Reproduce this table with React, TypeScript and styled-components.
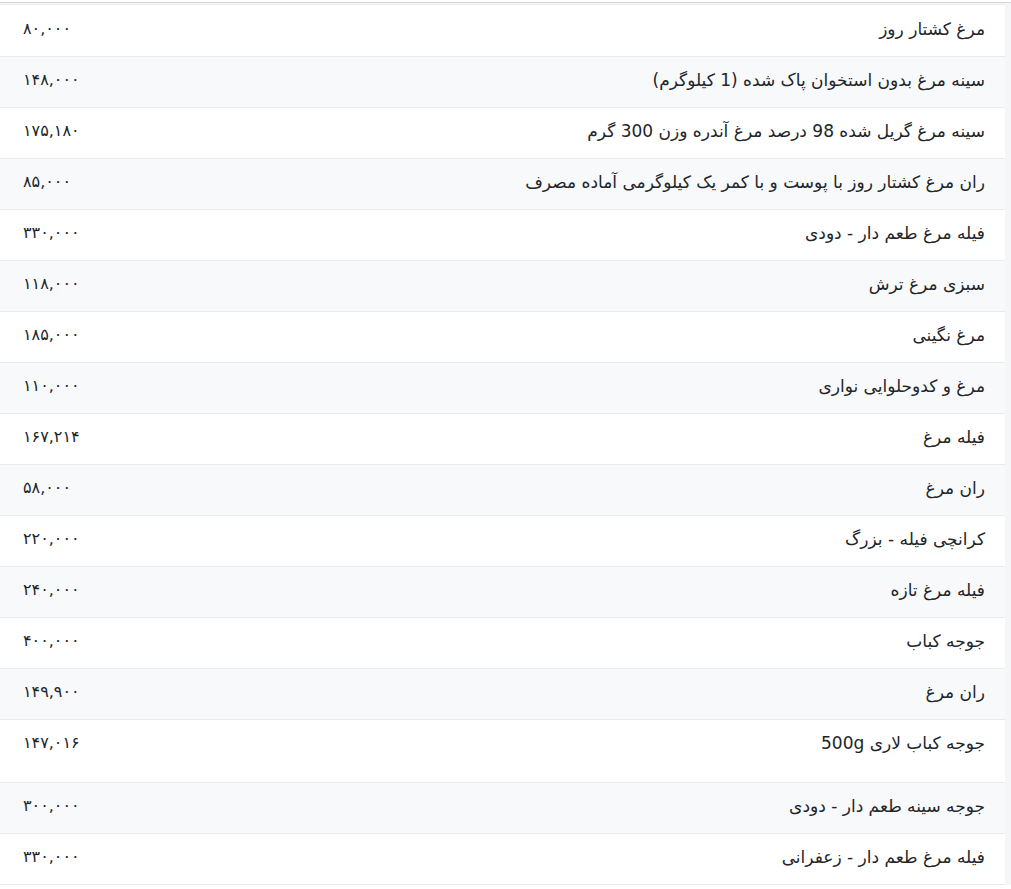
import React from "react";
import styled, { createGlobalStyle } from "styled-components";

const Global = createGlobalStyle`
  html, body { margin: 0; padding: 0; background: #ffffff; }
  body { font-family: "DejaVu Sans", "Noto Sans", sans-serif; color: #212529; }
`;

const Page = styled.div`
  padding-top: 2px;
  background: #fff;
`;

const Frame = styled.div`
  border-top: 1px solid #d6d6d8;
  display: flex;
  background: #f5f6f8;
`;

const Table = styled.div`
  width: 1005px;
  background: #fff;
  border-top: 1px solid #ebedf0;
  margin-top: 1px;
  padding-top: 1px;
`;

const Row = styled.div<{ $striped: boolean; $tall?: boolean }>`
  display: flex;
  direction: rtl;
  justify-content: space-between;
  align-items: flex-start;
  padding: 10px 20px ${(p) => (p.$tall ? "26px" : "14px")} 23px;
  border-bottom: 1px solid #e8eaed;
  background: ${(p) => (p.$striped ? "#f8f9fb" : "#ffffff")};
  font-size: 17px;
  line-height: 26px;
`;

const Name = styled.div`
  text-align: right;
`;

const Price = styled.div`
  text-align: left;
  direction: ltr;
  font-size: 16px;
`;

const items: { name: string; price: string; tall?: boolean }[] = [
  { name: "مرغ کشتار روز", price: "۸۰,۰۰۰" },
  { name: "سینه مرغ بدون استخوان پاک شده (1 کیلوگرم)", price: "۱۴۸,۰۰۰" },
  { name: "سینه مرغ گریل شده 98 درصد مرغ آندره وزن 300 گرم", price: "۱۷۵,۱۸۰" },
  { name: "ران مرغ کشتار روز با پوست و با کمر یک کیلوگرمی آماده مصرف", price: "۸۵,۰۰۰" },
  { name: "فیله مرغ طعم دار - دودی", price: "۳۳۰,۰۰۰" },
  { name: "سبزی مرغ ترش", price: "۱۱۸,۰۰۰" },
  { name: "مرغ نگینی", price: "۱۸۵,۰۰۰" },
  { name: "مرغ و کدوحلوایی نواری", price: "۱۱۰,۰۰۰" },
  { name: "فیله مرغ", price: "۱۶۷,۲۱۴" },
  { name: "ران مرغ", price: "۵۸,۰۰۰" },
  { name: "کرانچی فیله - بزرگ", price: "۲۲۰,۰۰۰" },
  { name: "فیله مرغ تازه", price: "۲۴۰,۰۰۰" },
  { name: "جوجه کباب", price: "۴۰۰,۰۰۰" },
  { name: "ران مرغ", price: "۱۴۹,۹۰۰" },
  { name: "جوجه کباب لاری 500g", price: "۱۴۷,۰۱۶", tall: true },
  { name: "جوجه سینه طعم دار - دودی", price: "۳۰۰,۰۰۰" },
  { name: "فیله مرغ طعم دار - زعفرانی", price: "۳۳۰,۰۰۰" },
];

export default function App() {
  return (
    <Page>
      <Global />
      <Frame>
        <Table>
          {items.map((it, i) => (
            <Row key={i} $striped={i % 2 === 1} $tall={it.tall}>
              <Name>{it.name}</Name>
              <Price>{it.price}</Price>
            </Row>
          ))}
        </Table>
      </Frame>
    </Page>
  );
}
